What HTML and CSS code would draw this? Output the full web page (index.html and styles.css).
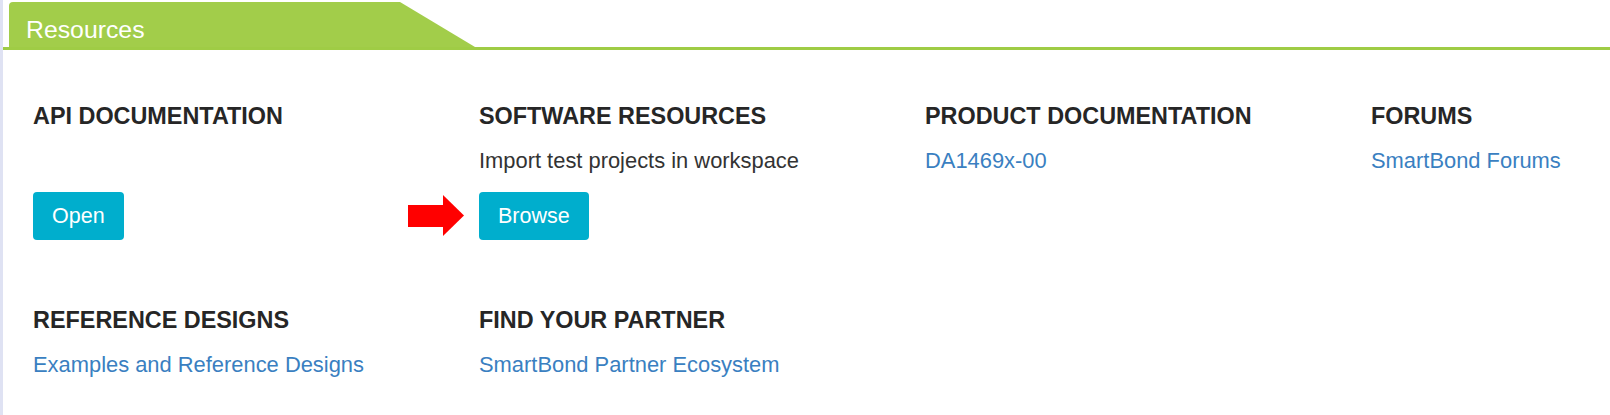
FILE: index.html
```html
<!DOCTYPE html>
<html>
<head>
<meta charset="utf-8">
<link rel="stylesheet" href="styles.css">
</head>
<body>
<div class="page">
  <div class="panel-head">
    <div class="tab"><span class="tab-title">Resources</span></div>
  </div>
  <div class="grid">
    <section class="item">
      <h3 class="item-title">API DOCUMENTATION</h3>
      <p class="item-desc">&nbsp;</p>
      <div class="actions"><button class="btn">Open</button></div>
    </section>
    <section class="item">
      <h3 class="item-title">SOFTWARE RESOURCES</h3>
      <p class="item-desc">Import test projects in workspace</p>
      <div class="actions">
        <svg class="arrow" viewBox="0 0 56 41" width="56" height="41"><rect x="0" y="10" width="36" height="22" fill="#ff0000"/><polygon points="35,0 56,20.5 35,41" fill="#ff0000"/></svg>
        <button class="btn">Browse</button>
      </div>
    </section>
    <section class="item">
      <h3 class="item-title">PRODUCT DOCUMENTATION</h3>
      <p class="item-desc"><a class="link" href="#">DA1469x-00</a></p>
    </section>
    <section class="item">
      <h3 class="item-title">FORUMS</h3>
      <p class="item-desc"><a class="link" href="#">SmartBond Forums</a></p>
    </section>
    <section class="item row2">
      <h3 class="item-title">REFERENCE DESIGNS</h3>
      <p class="item-desc"><a class="link" href="#">Examples and Reference Designs</a></p>
    </section>
    <section class="item row2">
      <h3 class="item-title">FIND YOUR PARTNER</h3>
      <p class="item-desc"><a class="link" href="#">SmartBond Partner Ecosystem</a></p>
    </section>
  </div>
</div>
</body>
</html>
```
FILE: styles.css
```css
html, body {
  margin: 0;
  padding: 0;
  background: #ffffff;
}
body {
  font-family: "Liberation Sans", Arial, sans-serif;
  color: #333333;
  overflow: hidden;
}
.page {
  min-height: 415px;
  border-left: 3px solid #dfe2f3;
  box-sizing: border-box;
}
.panel-head {
  padding-top: 2px;
  padding-left: 6px;
  border-bottom: 3px solid #9fcc45;
}
.tab {
  width: 466px;
  height: 45px;
  background: #a2cd4a;
  border-top-left-radius: 4px;
  clip-path: polygon(0 0, 391px 0, 100% 100%, 0 100%);
  box-sizing: border-box;
  padding-top: 14px;
  padding-left: 17px;
}
.tab-title {
  display: block;
  color: #ffffff;
  font-size: 24.8px;
  line-height: 28px;
}
.grid {
  display: grid;
  grid-template-columns: repeat(3, 446px) minmax(0, 1fr);
  padding-left: 30px;
  padding-top: 54px;
  row-gap: 0;
}
.item {
  display: flex;
  flex-direction: column;
  align-items: flex-start;
  min-width: 0;
}
.item.row2 {
  padding-top: 68px;
}
.item-title {
  margin: 0;
  font-size: 23.4px;
  line-height: 25.7px;
  font-weight: bold;
  color: #262626;
  white-space: nowrap;
}
.item-desc {
  margin: 16px 0 0 0;
  font-size: 21.9px;
  line-height: 30.7px;
  color: #333333;
  white-space: nowrap;
}
.link {
  color: #3a7fc1;
  text-decoration: none;
}
.actions {
  position: relative;
  margin-top: 16px;
}
.btn {
  display: block;
  height: 48px;
  padding: 0 19px;
  border: none;
  border-radius: 4px;
  background: #00aecd;
  color: #ffffff;
  font-family: "Liberation Sans", Arial, sans-serif;
  font-size: 21.5px;
  line-height: 48px;
}
.arrow {
  position: absolute;
  left: -71px;
  top: 3px;
}
```
